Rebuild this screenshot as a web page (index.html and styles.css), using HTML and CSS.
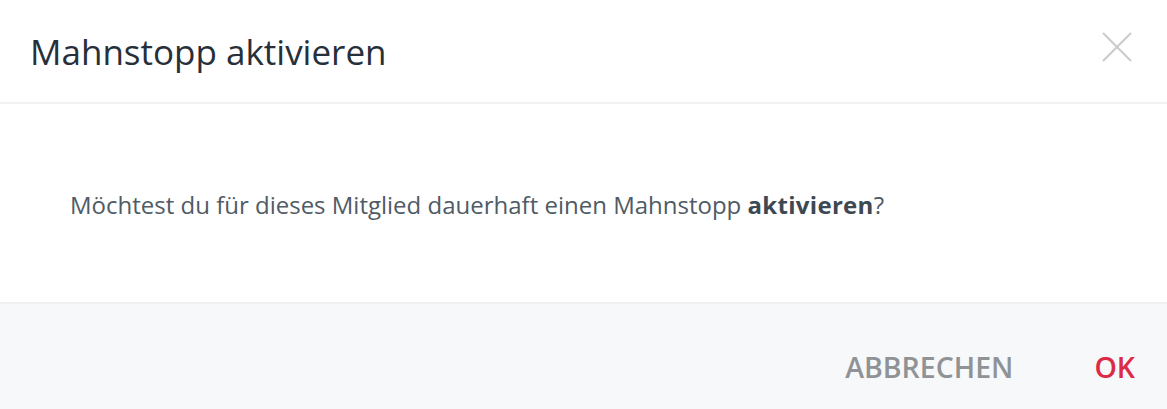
FILE: index.html
```html
<!DOCTYPE html>
<html lang="de">
<head>
<meta charset="utf-8">
<link rel="stylesheet" href="styles.css">
</head>
<body>
<div class="dialog">
  <header class="head">
    <h1 class="title">Mahnstopp aktivieren</h1>
    <button class="close" aria-label="Schließen">
      <svg width="30" height="30" viewBox="0 0 30 30"><path d="M1 1 L29 29 M29 1 L1 29" stroke="#c9cbcd" stroke-width="2" fill="none"/></svg>
    </button>
  </header>
  <main class="body">
    <p class="msg">Möchtest du für dieses Mitglied dauerhaft einen Mahnstopp <strong>aktivieren</strong>?</p>
  </main>
  <footer class="foot">
    <button class="btn cancel">ABBRECHEN</button>
    <button class="btn ok">OK</button>
  </footer>
</div>
</body>
</html>
```
FILE: styles.css
```css
html, body { margin: 0; padding: 0; background: #fff; }
body { font-family: "Open Sans", "Lato", sans-serif; width: 1167px; height: 409px; overflow: hidden; }
.dialog { display: flex; flex-direction: column; height: 409px; }
.head { height: 104px; box-sizing: border-box; border-bottom: 2px solid #f0f1f3; display: flex; align-items: center; justify-content: space-between; padding: 0 35px 0 30px; }
.title { margin: 0; font-weight: 400; font-size: 35px; color: #27303a; letter-spacing: 0; }
.close { background: none; border: 0; padding: 0; width: 30px; height: 30px; cursor: pointer; display: flex; margin-top: -8px; }
.body { height: 200px; box-sizing: border-box; border-bottom: 2px solid #eff0f2; display: flex; align-items: center; padding: 0 70px; }
.msg { margin: 0; font-size: 24px; color: #4f5b65; margin-top: 2px; }
.msg strong { font-weight: 700; color: #3d4852; letter-spacing: 0.3px; }
.foot { flex: 1; background: #f7f8fa; display: flex; align-items: center; justify-content: flex-end; padding: 20px 32px 0 0; gap: 81px; }
.btn { background: none; border: 0; padding: 0; font-family: inherit; font-size: 28.5px; font-weight: 600; cursor: pointer; }
.cancel { color: #8f9396; }
.ok { color: #dc2b46; }
```
